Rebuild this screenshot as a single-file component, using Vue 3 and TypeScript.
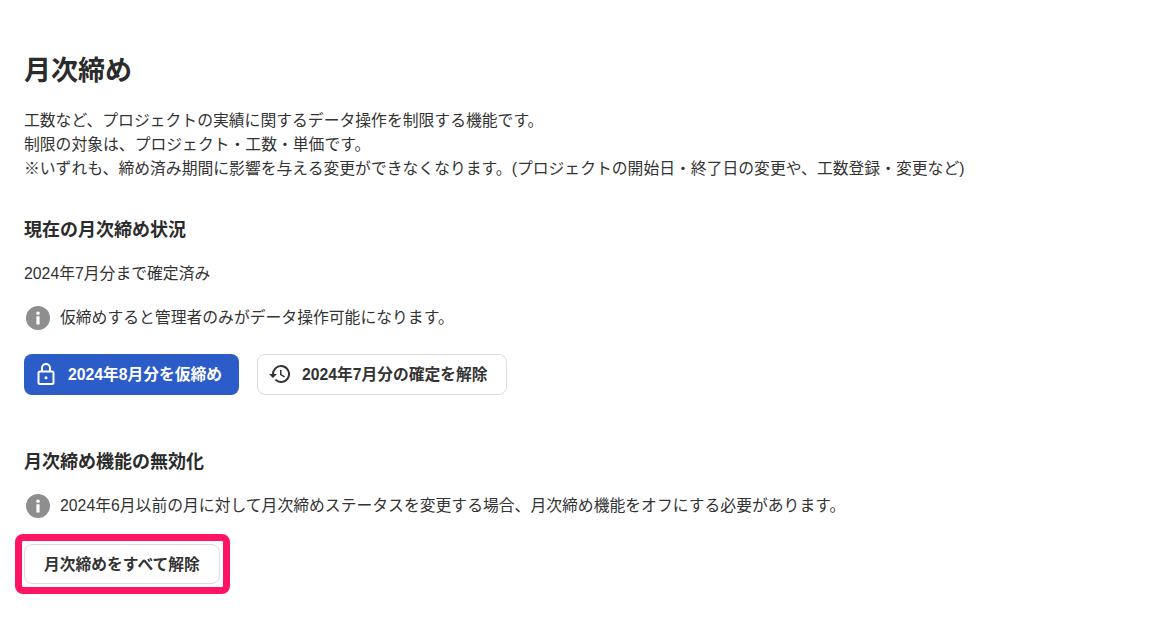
<template>
  <div class="page">
    <h1 class="page-title">月次締め</h1>
    <p class="desc">
      工数など、プロジェクトの実績に関するデータ操作を制限する機能です。<br />
      制限の対象は、プロジェクト・工数・単価です。<br />
      ※いずれも、締め済み期間に影響を与える変更ができなくなります。(プロジェクトの開始日・終了日の変更や、工数登録・変更など)
    </p>

    <h2 class="section-title first">現在の月次締め状況</h2>
    <p class="status">{{ closedLabel }}</p>
    <div class="notice">
      <svg class="info-icon" viewBox="0 0 24 24">
        <circle cx="12" cy="12" r="12" fill="#8e8e8e" />
        <rect x="10.4" y="10.2" width="3.2" height="8.4" rx="0.4" fill="#fff" />
        <circle cx="12" cy="7.2" r="1.8" fill="#fff" />
      </svg>
      <span>仮締めすると管理者のみがデータ操作可能になります。</span>
    </div>
    <div class="actions">
      <button type="button" class="btn btn-primary">
        <svg class="btn-icon lock" viewBox="0 0 24 24" fill="none" stroke="currentColor" stroke-width="2">
          <rect x="4.5" y="9.5" width="15" height="12.5" rx="1.5"></rect>
          <path d="M8 9.5V6a4 4 0 0 1 8 0v3.5"></path>
          <circle cx="12" cy="15.8" r="1.5" fill="currentColor" stroke="none"></circle>
        </svg>
        2024年8月分を仮締め
      </button>
      <button type="button" class="btn btn-default">
        <svg class="btn-icon" viewBox="0 0 24 24" fill="currentColor">
          <path d="M13 3a9 9 0 0 0-9 9H1l3.89 3.89.07.14L9 12H6a7 7 0 1 1 2.05 4.95l-1.42 1.42A9 9 0 1 0 13 3zm-1 5v5l4.25 2.52.77-1.28-3.52-2.09V8H12z"></path>
        </svg>
        2024年7月分の確定を解除
      </button>
    </div>

    <h2 class="section-title second">月次締め機能の無効化</h2>
    <div class="notice">
      <svg class="info-icon" viewBox="0 0 24 24">
        <circle cx="12" cy="12" r="12" fill="#8e8e8e" />
        <rect x="10.4" y="10.2" width="3.2" height="8.4" rx="0.4" fill="#fff" />
        <circle cx="12" cy="7.2" r="1.8" fill="#fff" />
      </svg>
      <span>2024年6月以前の月に対して月次締めステータスを変更する場合、月次締め機能をオフにする必要があります。</span>
    </div>
    <div class="highlight-wrap">
      <button type="button" class="btn btn-default btn-plain">月次締めをすべて解除</button>
      <div class="highlight"></div>
    </div>
  </div>
</template>

<script setup lang="ts">
const closedLabel = '2024年7月分まで確定済み'
</script>

<style>
html,
body {
  margin: 0;
  background: #fff;
}
</style>

<style scoped>
.page {
  box-sizing: border-box;
  width: 1169px;
  height: 642px;
  padding: 54px 24px 0;
  overflow: hidden;
  color: #333;
  font-family: "Liberation Sans", "Noto Sans CJK JP", sans-serif;
  font-size: 15.82px;
  line-height: 24px;
}

.page-title {
  margin: 0;
  font-size: 27px;
  line-height: 34px;
  font-weight: 700;
  color: #2b2b2b;
}

.desc {
  margin: 21px 0 0;
}

.section-title {
  margin: 0;
  font-size: 18px;
  line-height: 24px;
  font-weight: 700;
  color: #2b2b2b;
}

.section-title.first {
  margin-top: 37px;
}

.section-title.second {
  margin-top: 55px;
}

.status {
  margin: 20px 0 0;
}

.notice {
  display: flex;
  align-items: center;
  gap: 10px;
  margin-top: 20px;
  padding-left: 2px;
}

.info-icon {
  width: 24px;
  height: 24px;
  flex: 0 0 24px;
}

.actions {
  display: flex;
  gap: 18px;
  margin-top: 24px;
}

.btn {
  display: inline-flex;
  align-items: center;
  height: 41px;
  box-sizing: border-box;
  padding: 0 18px 2px 10px;
  border-radius: 8px;
  font-family: inherit;
  font-size: 15.75px;
  font-weight: 700;
  cursor: pointer;
}

.btn-primary {
  border: none;
  background: #2b5cc8;
  color: #fff;
  padding-right: 17px;
}

.btn-default {
  border: 1px solid #dcdcdc;
  background: #fff;
  color: #333;
}

.btn-plain {
  height: 40px;
  padding: 0 19px 2px;
}

.btn-icon {
  width: 24px;
  height: 24px;
  margin-right: 10px;
}

.highlight-wrap {
  position: relative;
  display: inline-flex;
  margin-top: 26px;
}

.highlight {
  position: absolute;
  inset: -10px -10px -10px -9px;
  border: 7px solid #ff1464;
  border-radius: 8px;
  pointer-events: none;
}
</style>
